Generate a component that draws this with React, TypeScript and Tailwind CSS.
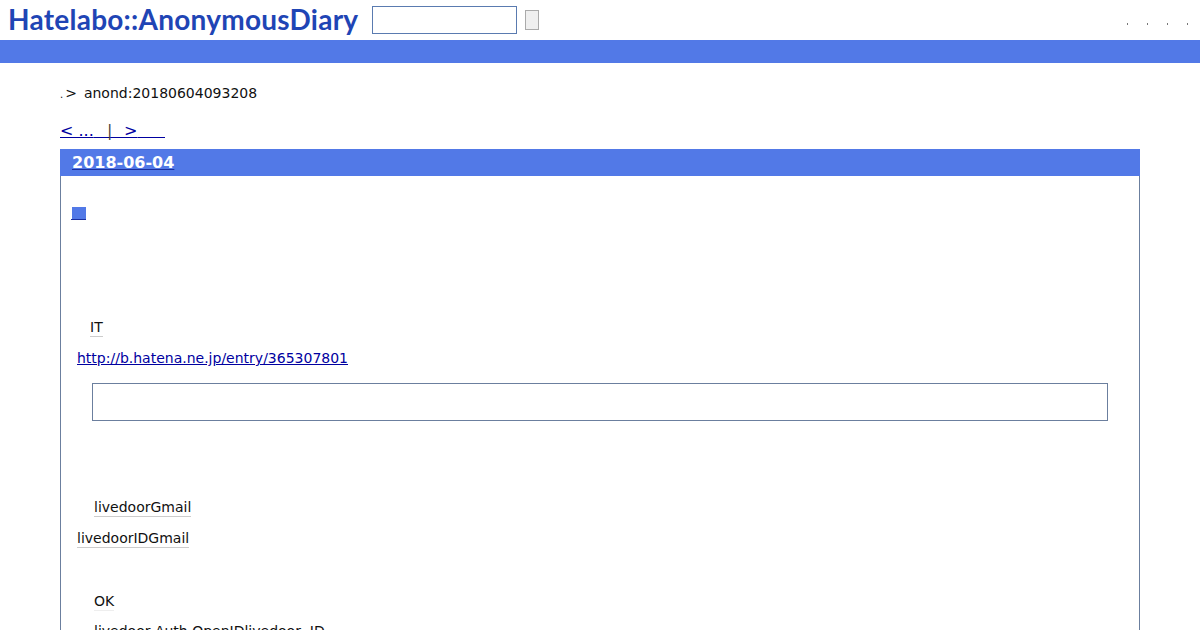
import React from 'react';

const dots = [0, 1, 2, 3];

export default function App() {
  return (
    <div className="h-[630px] overflow-hidden bg-white text-[14px] leading-[20px] text-[#111111] font-['DejaVu_Sans',sans-serif]">
      <header className="flex h-[40px] items-start">
        <h1 className="ml-[8px] mt-[2px] w-[352px] whitespace-nowrap text-[28px] leading-[34px] font-bold tracking-[0.25px] text-[#1f45b5] font-['Lato',sans-serif]">
          Hatelabo::AnonymousDiary
        </h1>
        <input className="ml-[12px] mt-[6px] h-[28px] w-[145px] border border-[#5a7bb0] bg-white" />
        <button className="ml-[8px] mt-[10px] h-[20px] w-[14px] border border-[#aaaaaa] bg-[#efefef]" />
        <nav className="ml-auto mr-[12px] mt-[23px] flex gap-[19px]">
          {dots.map(d => (
            <span key={d} className="h-[2px] w-[1px] bg-[#777777]" />
          ))}
        </nav>
      </header>
      <div className="h-[23px] bg-[#5279e7]" />

      <div className="mx-[60px]">
        <p className="mt-[20px] flex h-[20px] items-center whitespace-pre">
          <span className="text-[10px] self-end leading-[16px]">.</span>
          <span className="ml-[2px]">&gt;</span>
          <span className="ml-[7px]">anond:20180604093208</span>
        </p>
        <p className="mt-[18px] flex h-[20px] whitespace-pre text-[16px]">
          <a href="#" className="w-[42px] text-[#0000a0] underline">&lt; ...{'      '}</a>
          <span className="ml-[5px] w-[12px] text-[#444444]">|</span>
          <a href="#" className="w-[46px] overflow-hidden text-[#0000a0] underline">&nbsp;&gt;{'          '}</a>
        </p>

        <section className="mt-[8px] h-[600px] border border-[#6b7f9e]">
          <h2 className="-mx-px -mt-px h-[27px] bg-[#5279e7] pl-[12px] text-[16px] leading-[27px] font-bold text-white">
            <a href="#" className="underline decoration-[#1a2fa0]">2018-06-04</a>
          </h2>

          <div className="ml-[10px] mt-[27px] h-[20px]">
            <a href="#" className="inline-flex w-[15px] justify-end border-b border-[#1a2fa0] pb-0">
              <span className="mt-[4px] h-[12px] w-[14px] bg-[#5279e7]" />
            </a>
          </div>

          <p className="ml-[29px] mt-[94px] h-[20px]">
            <span className="border-b border-[#cccccc] pb-[1px]">IT</span>
          </p>
          <p className="ml-[16px] mt-[11px] h-[20px]">
            <a href="#" className="text-[#0000a0] underline">http://b.hatena.ne.jp/entry/365307801</a>
          </p>
          <div className="ml-[31px] mr-[31px] mt-[15px] h-[38px] border border-[#6b7f9e]" />

          <p className="ml-[33px] mt-[76px] h-[20px]">
            <span className="border-b border-[#cccccc] pb-[1px]">livedoorGmail</span>
          </p>
          <p className="ml-[16px] mt-[11px] h-[20px]">
            <span className="border-b border-[#cccccc] pb-[1px]">livedoorIDGmail</span>
          </p>
          <p className="ml-[33px] mt-[43px] h-[20px]">
            <span className="border-b border-[#eeeeee] pb-[1px]">OK</span>
          </p>
          <p className="ml-[33px] mt-[10px] h-[20px] whitespace-pre">livedoor Auth OpenIDlivedoor  ID</p>
        </section>
      </div>
    </div>
  );
}
